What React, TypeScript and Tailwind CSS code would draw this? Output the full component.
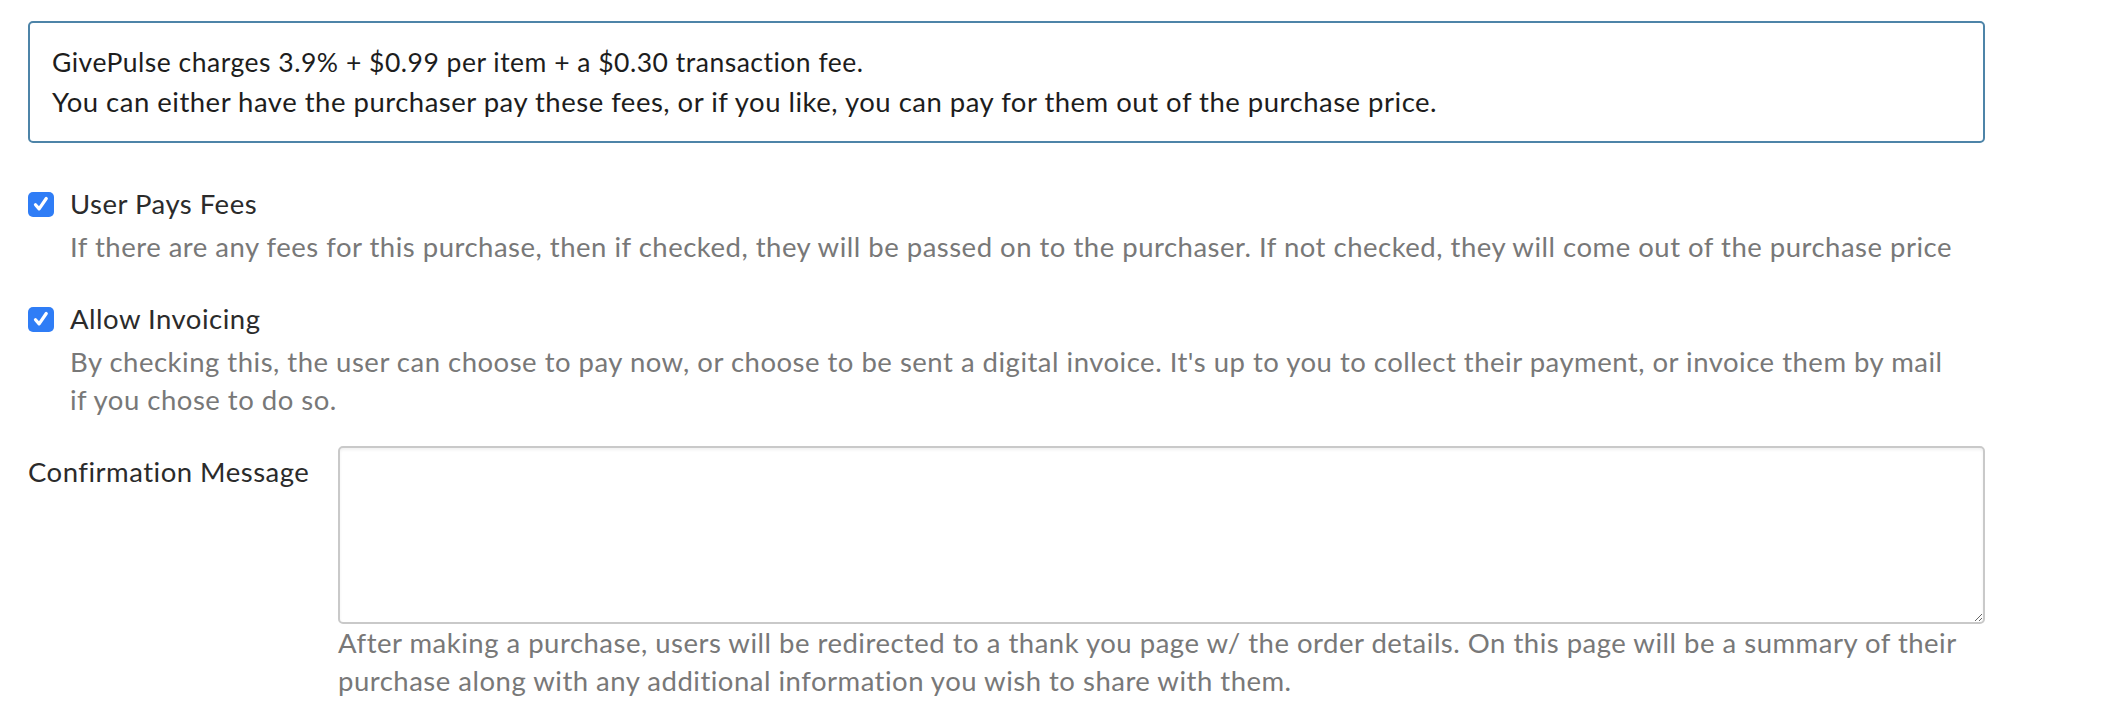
import React from 'react';

const Check = () => (
  <span className="flex h-[25px] w-[26px] shrink-0 items-center justify-center rounded-[5px] bg-[#2f7df6]">
    <svg viewBox="0 0 16 16" className="h-[20px] w-[20px]" fill="none">
      <path d="M3.6 8.6l2.9 3.3L12.2 3.6" stroke="#fff" strokeWidth="2.6" strokeLinecap="round" strokeLinejoin="round" />
    </svg>
  </span>
);

const CheckRow = ({ label, children }: { label: string; children: React.ReactNode }) => (
  <div className="flex flex-col">
    <div className="flex items-center gap-[16px] leading-[40px] text-[#2b2b2b]">
      <Check />
      <span>{label}</span>
    </div>
    <p className="mt-[4px] pl-[42px] leading-[38px] text-[#787878]">{children}</p>
  </div>
);

export default function App() {
  return (
    <div className="min-h-screen bg-white pt-[21px] pl-[28px] text-[27.5px] tracking-[0.5px]" style={{ fontFamily: 'Lato, "Open Sans", sans-serif' }}>
      <div className="w-[1957px]">
        {/* fee notice */}
        <div className="rounded-[5px] border-2 border-[#4d84a8] py-[19px] pl-[22px] leading-[40px] text-[#1d1d1d]">
          <p className="text-[26.5px]">GivePulse charges 3.9% + $0.99 per item + a $0.30 transaction fee.</p>
          <p>You can either have the purchaser pay these fees, or if you like, you can pay for them out of the purchase price.</p>
        </div>

        <div className="mt-[41px] flex flex-col gap-[33px]">
          <CheckRow label="User Pays Fees">
            If there are any fees for this purchase, then if checked, they will be passed on to the purchaser. If not checked, they will come out of the purchase price
          </CheckRow>
          <CheckRow label="Allow Invoicing">
            By checking this, the user can choose to pay now, or choose to be sent a digital invoice. It's up to you to collect their payment, or invoice them by mail
            <br />
            if you chose to do so.
          </CheckRow>
        </div>

        {/* confirmation message */}
        <div className="mt-[27px] flex">
          <label className="w-[310px] shrink-0 pt-[6px] leading-[40px] text-[#2b2b2b]">Confirmation Message</label>
          <div className="flex-1">
            <textarea className="block h-[178px] w-full rounded-[5px] border-2 border-[#c9c9c9] bg-white shadow-[inset_0_2px_3px_rgba(0,0,0,0.06)] outline-none" />
            <p className="leading-[38px] text-[#787878]">
              After making a purchase, users will be redirected to a thank you page w/ the order details. On this page will be a summary of their
              <br />
              purchase along with any additional information you wish to share with them.
            </p>
          </div>
        </div>
      </div>
    </div>
  );
}
